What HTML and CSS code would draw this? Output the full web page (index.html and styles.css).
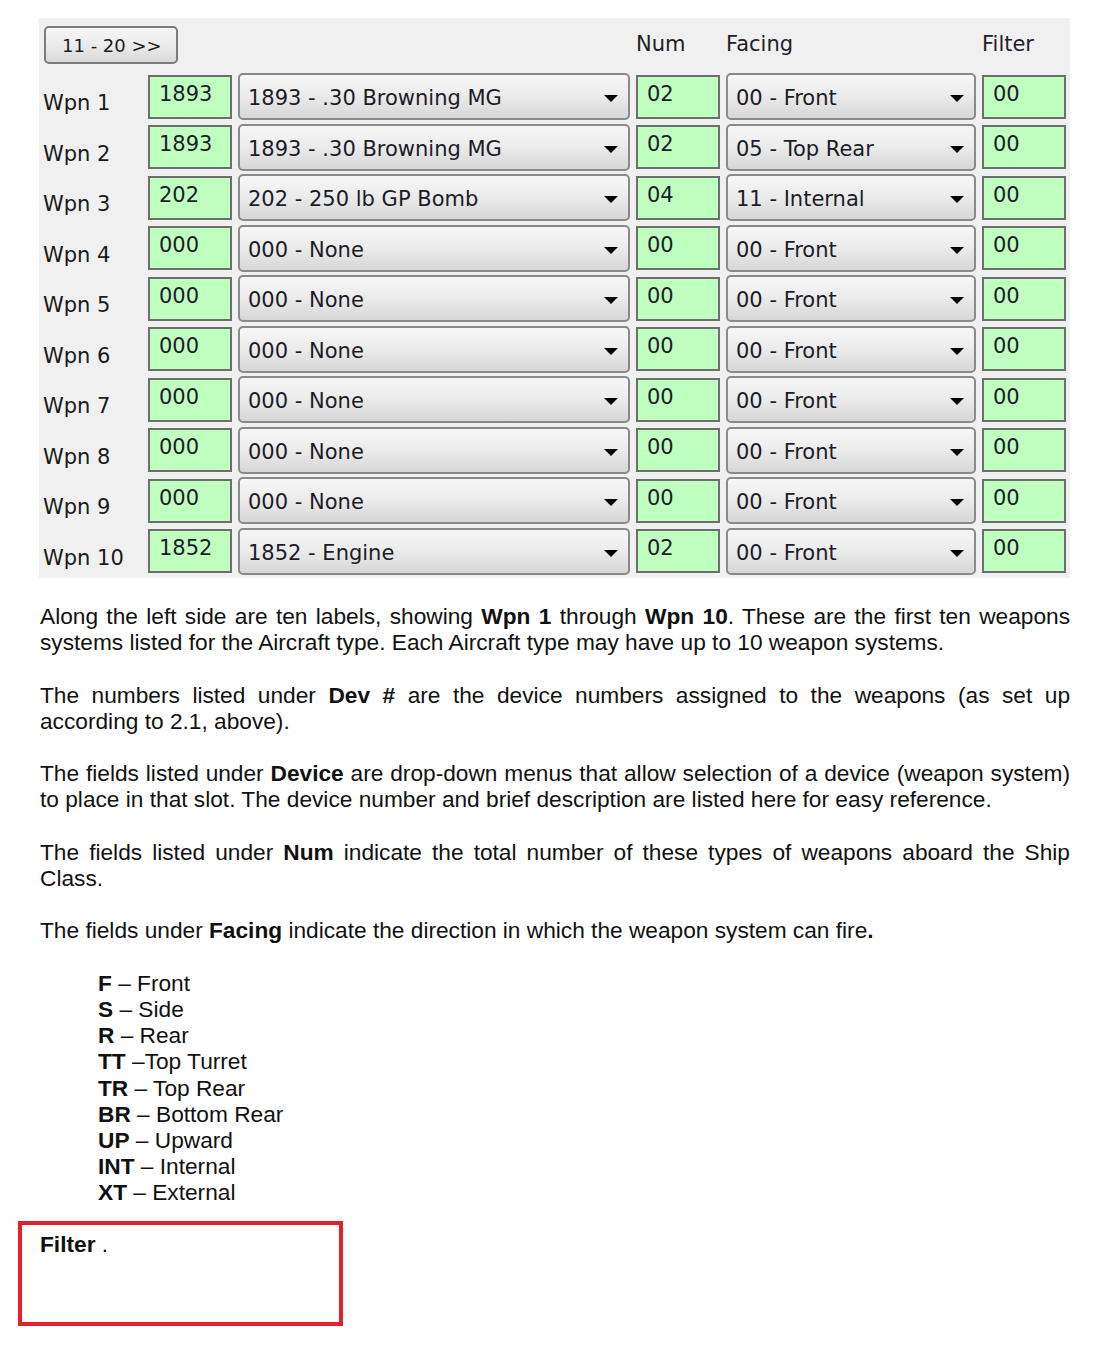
FILE: index.html
```html
<!DOCTYPE html>
<html>
<head>
<meta charset="utf-8">
<title>Weapons</title>
<link rel="stylesheet" href="styles.css">
</head>
<body>
<div class="panel">
  <div class="btn-cell"><div class="pager">11 - 20 &gt;&gt;</div></div>
  <div class="colhead">Num</div>
  <div class="colhead">Facing</div>
  <div class="colhead">Filter</div>

  <div class="lbl">Wpn 1</div>
  <div class="fld">1893</div>
  <div class="sel"><span>1893 - .30 Browning MG</span><span class="arrow"></span></div>
  <div class="fld">02</div>
  <div class="sel"><span>00 - Front</span><span class="arrow"></span></div>
  <div class="fld">00</div>

  <div class="lbl">Wpn 2</div>
  <div class="fld">1893</div>
  <div class="sel"><span>1893 - .30 Browning MG</span><span class="arrow"></span></div>
  <div class="fld">02</div>
  <div class="sel"><span>05 - Top Rear</span><span class="arrow"></span></div>
  <div class="fld">00</div>

  <div class="lbl">Wpn 3</div>
  <div class="fld">202</div>
  <div class="sel"><span>202 - 250 lb GP Bomb</span><span class="arrow"></span></div>
  <div class="fld">04</div>
  <div class="sel"><span>11 - Internal</span><span class="arrow"></span></div>
  <div class="fld">00</div>

  <div class="lbl">Wpn 4</div>
  <div class="fld">000</div>
  <div class="sel"><span>000 - None</span><span class="arrow"></span></div>
  <div class="fld">00</div>
  <div class="sel"><span>00 - Front</span><span class="arrow"></span></div>
  <div class="fld">00</div>

  <div class="lbl">Wpn 5</div>
  <div class="fld">000</div>
  <div class="sel"><span>000 - None</span><span class="arrow"></span></div>
  <div class="fld">00</div>
  <div class="sel"><span>00 - Front</span><span class="arrow"></span></div>
  <div class="fld">00</div>

  <div class="lbl">Wpn 6</div>
  <div class="fld">000</div>
  <div class="sel"><span>000 - None</span><span class="arrow"></span></div>
  <div class="fld">00</div>
  <div class="sel"><span>00 - Front</span><span class="arrow"></span></div>
  <div class="fld">00</div>

  <div class="lbl">Wpn 7</div>
  <div class="fld">000</div>
  <div class="sel"><span>000 - None</span><span class="arrow"></span></div>
  <div class="fld">00</div>
  <div class="sel"><span>00 - Front</span><span class="arrow"></span></div>
  <div class="fld">00</div>

  <div class="lbl">Wpn 8</div>
  <div class="fld">000</div>
  <div class="sel"><span>000 - None</span><span class="arrow"></span></div>
  <div class="fld">00</div>
  <div class="sel"><span>00 - Front</span><span class="arrow"></span></div>
  <div class="fld">00</div>

  <div class="lbl">Wpn 9</div>
  <div class="fld">000</div>
  <div class="sel"><span>000 - None</span><span class="arrow"></span></div>
  <div class="fld">00</div>
  <div class="sel"><span>00 - Front</span><span class="arrow"></span></div>
  <div class="fld">00</div>

  <div class="lbl">Wpn 10</div>
  <div class="fld">1852</div>
  <div class="sel"><span>1852 - Engine</span><span class="arrow"></span></div>
  <div class="fld">02</div>
  <div class="sel"><span>00 - Front</span><span class="arrow"></span></div>
  <div class="fld">00</div>
</div>

<div class="doc">
  <p>Along the left side are ten labels, showing <b>Wpn 1</b> through <b>Wpn 10</b>. These are the first ten weapons systems listed for the Aircraft type. Each Aircraft type may have up to 10 weapon systems.</p>
  <p>The numbers listed under <b>Dev #</b> are the device numbers assigned to the weapons (as set up according to 2.1, above).</p>
  <p>The fields listed under <b>Device</b> are drop-down menus that allow selection of a device (weapon system) to place in that slot. The device number and brief description are listed here for easy reference.</p>
  <p>The fields listed under <b>Num</b> indicate the total number of these types of weapons aboard the Ship Class.</p>
  <p>The fields under <b>Facing</b> indicate the direction in which the weapon system can fire<b>.</b></p>
  <ul class="facings">
    <li><b>F</b> – Front</li>
    <li><b>S</b> – Side</li>
    <li><b>R</b> – Rear</li>
    <li><b>TT</b> –Top Turret</li>
    <li><b>TR</b> – Top Rear</li>
    <li><b>BR</b> – Bottom Rear</li>
    <li><b>UP</b> – Upward</li>
    <li><b>INT</b> – Internal</li>
    <li><b>XT</b> – External</li>
  </ul>
</div>

<div class="filter-box"><b>Filter</b> .</div>
</body>
</html>
```

FILE: styles.css
```css
html, body {
  margin: 0;
  padding: 0;
  background: #ffffff;
}

body {
  width: 1111px;
  min-height: 1352px;
}

.panel {
  margin: 18px 0 0 39px;
  width: 1031px;
  box-sizing: border-box;
  padding: 0 4px 3.5px 0;
  background: #f0f0f0;
  display: grid;
  grid-template-columns: 103px 84px 392px 84px 250px 84px;
  grid-template-rows: 51.5px repeat(10, 47px);
  column-gap: 6px;
  row-gap: 3.5px;
  font-family: "DejaVu Sans", sans-serif;
  font-size: 21px;
  line-height: 25px;
  color: #1c1c28;
}

.btn-cell {
  grid-column: 1 / 4;
  padding: 8px 0 0 5px;
}

.pager {
  width: 134px;
  height: 38px;
  box-sizing: border-box;
  border: 2px solid #7b7b7b;
  border-radius: 5px;
  background: linear-gradient(#f7f7f7, #ebebeb 50%, #d9d9d9);
  font-size: 18px;
  line-height: 22px;
  padding: 7px 0 0 16px;
  color: #1c1c28;
}

.colhead {
  padding-top: 14px;
  color: #20202a;
}

.lbl {
  padding: 18px 0 0 4px;
  color: #1a1a1a;
  white-space: nowrap;
}

.fld {
  align-self: center;
  height: 44px;
  box-sizing: border-box;
  border: 2px solid #6e6e6e;
  background: #bfffbf;
  padding: 5px 0 0 9px;
}

.sel {
  height: 47px;
  box-sizing: border-box;
  border: 2px solid #8a8a8a;
  border-radius: 5px;
  background: linear-gradient(#f7f7f7, #ececec 45%, #d7d7d7);
  display: flex;
  justify-content: space-between;
  align-items: flex-start;
  padding: 11px 10px 0 8px;
  white-space: nowrap;
}

.arrow {
  width: 0;
  height: 0;
  margin-top: 9px;
  border-left: 7px solid transparent;
  border-right: 7px solid transparent;
  border-top: 7px solid #000;
}

.doc {
  margin: 25px 0 0 40px;
  width: 1030px;
  font-family: "Liberation Sans", Arial, sans-serif;
  font-size: 22.7px;
  line-height: 26.2px;
  color: #111111;
}

.doc p {
  margin: 0 0 26.2px 0;
  text-align: justify;
}

.facings {
  list-style: none;
  margin: 0;
  padding: 0 0 0 58px;
}

.filter-box {
  margin: 15px 0 0 18px;
  width: 325px;
  height: 105px;
  box-sizing: border-box;
  border: 4px solid #e4202a;
  padding: 6px 0 0 18px;
  font-family: "Liberation Sans", Arial, sans-serif;
  font-size: 22.7px;
  line-height: 26.2px;
  color: #111111;
}
```
